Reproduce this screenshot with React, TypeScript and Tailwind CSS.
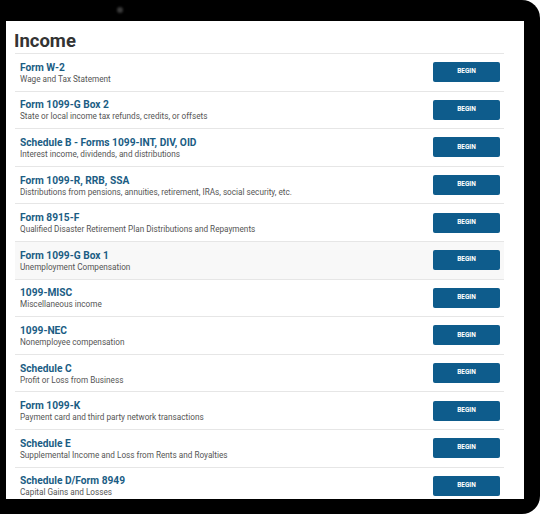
import React from "react";

const rows: { title: string; sub: string; hl?: boolean }[] = [
  { title: "Form W-2", sub: "Wage and Tax Statement" },
  { title: "Form 1099-G Box 2", sub: "State or local income tax refunds, credits, or offsets" },
  { title: "Schedule B - Forms 1099-INT, DIV, OID", sub: "Interest income, dividends, and distributions" },
  { title: "Form 1099-R, RRB, SSA", sub: "Distributions from pensions, annuities, retirement, IRAs, social security, etc." },
  { title: "Form 8915-F", sub: "Qualified Disaster Retirement Plan Distributions and Repayments" },
  { title: "Form 1099-G Box 1", sub: "Unemployment Compensation", hl: true },
  { title: "1099-MISC", sub: "Miscellaneous income" },
  { title: "1099-NEC", sub: "Nonemployee compensation" },
  { title: "Schedule C", sub: "Profit or Loss from Business" },
  { title: "Form 1099-K", sub: "Payment card and third party network transactions" },
  { title: "Schedule E", sub: "Supplemental Income and Loss from Rents and Royalties" },
  { title: "Schedule D/Form 8949", sub: "Capital Gains and Losses" },
];

export default function App() {
  return (
    <div
      className="w-[543px] h-[514px] bg-white overflow-hidden"
      style={{ fontFamily: "Roboto, 'Liberation Sans', sans-serif" }}
    >
      <div className="relative w-[540px] h-[514px] bg-black rounded-tr-[18px] rounded-br-[18px] pl-[6px] pt-[21px] pr-[16px] pb-[15px]">
        <div className="absolute left-[117px] top-[7px] w-[6px] h-[6px] rounded-full bg-[#3a3a3a] blur-[1px]" />
        <div className="w-[518px] h-[478px] bg-white overflow-hidden pl-[9px] pr-[20px] pt-[8px]">
          <h1 className="text-[18.5px] leading-[24px] font-bold text-[#333333] -ml-[1px]">Income</h1>
          <div className="border-t border-[#e6e6e6]">
            {rows.map((r) => (
              <div
                key={r.title}
                className={`h-[37.6px] border-b border-[#e6e6e6] flex items-center justify-between pl-[5px] pr-[4px] ${r.hl ? "bg-[#f8f8f8]" : "bg-white"}`}
              >
                <div className="flex flex-col pt-[1px]">
                  <div className="text-[10.2px] leading-[13px] font-bold text-[#1b5d84]">{r.title}</div>
                  <div className="text-[8.2px] leading-[11px] text-[#555555]">{r.sub}</div>
                </div>
                <div className="w-[67px] h-[20px] rounded-[2px] bg-[#0e5c8c] flex items-center justify-center text-white text-[6.5px] font-bold">
                  BEGIN
                </div>
              </div>
            ))}
          </div>
        </div>
      </div>
    </div>
  );
}
